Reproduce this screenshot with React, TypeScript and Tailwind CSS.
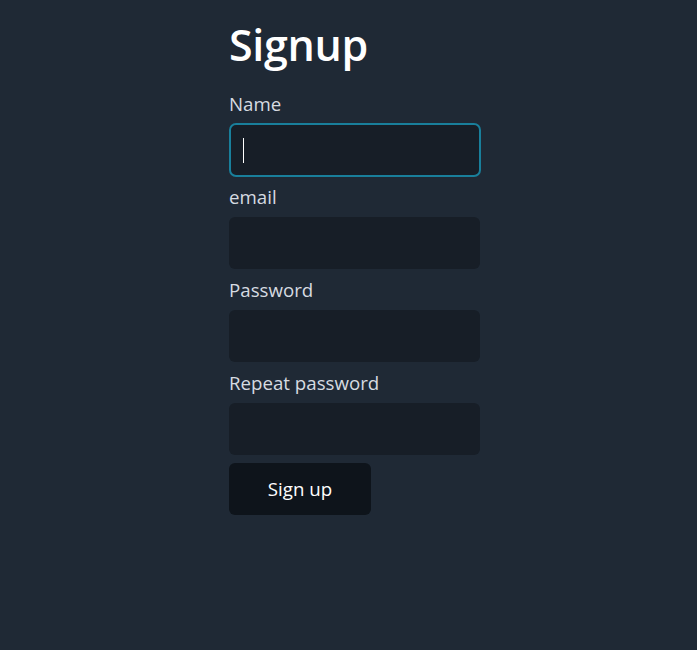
import type { FC } from 'react'

const fields = [
  { label: 'Name', type: 'text', focused: true },
  { label: 'email', type: 'email', focused: false },
  { label: 'Password', type: 'password', focused: false },
  { label: 'Repeat password', type: 'password', focused: false },
]

const Field: FC<{ label: string; type: string; focused: boolean }> = ({ label, type, focused }) => (
  <div className="flex flex-col">
    <label className="text-[18.7px] leading-[27px] text-[#d6dbe1] mt-[7px] mb-[7px]">{label}</label>
    <div
      className={
        focused
          ? 'relative w-[252px] h-[54px] -mt-[1px] -mb-[1px] rounded-[7px] bg-[#171e27] border-2 border-[#197f9b]'
          : 'relative w-[251px] h-[52px] rounded-[6px] bg-[#171e27]'
      }
    >
      <input type={type} className="w-full h-full bg-transparent outline-none px-3 text-white" />
      {focused && <span className="absolute left-[12px] top-[13px] w-px h-[25px] bg-white" />}
    </div>
  </div>
)

export default function App() {
  return (
    <div
      className="min-h-[650px] w-full bg-[#1f2935] flex justify-center"
      style={{ fontFamily: '"Open Sans", "Noto Sans", sans-serif' }}
    >
      <div className="flex flex-col w-[239px] pt-[18px]">
        <h1 className="text-[43px] leading-[54px] font-semibold text-white tracking-[-0.3px] mb-[11px]">Signup</h1>
        <div className="flex flex-col">
          {fields.map((f) => (
            <Field key={f.label} {...f} />
          ))}
        </div>
        <button className="mt-[8px] w-[142px] h-[52px] rounded-[6px] bg-[#0e141b] text-[18.7px] text-white">
          Sign up
        </button>
      </div>
    </div>
  )
}
